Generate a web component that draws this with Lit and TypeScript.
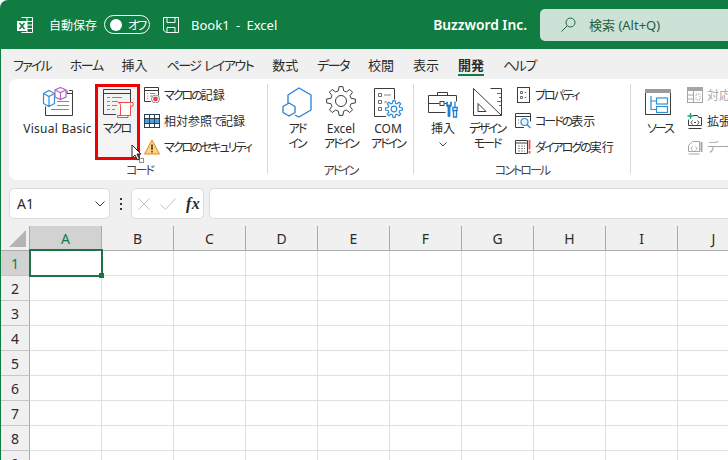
import { LitElement, html, css, svg } from 'lit';
import { customElement } from 'lit/decorators.js';

const DARK = '#3c3c3c';
const BLUE = '#2f8fd8';
const GRAY = '#a6a6a6';

// outline of a gear, used for the Excel add-in and COM add-in icons
function gearPath(cx: number, cy: number, ro: number, ri: number, teeth: number) {
  const step = (Math.PI * 2) / teeth;
  let d = '';
  for (let i = 0; i < teeth; i++) {
    const a = i * step - Math.PI / 2;
    const pts: [number, number][] = [
      [ri, a - step * 0.32],
      [ro, a - step * 0.17],
      [ro, a + step * 0.17],
      [ri, a + step * 0.32],
    ];
    for (const [r, t] of pts) {
      d += `${d ? 'L' : 'M'}${(cx + r * Math.cos(t)).toFixed(2)} ${(cy + r * Math.sin(t)).toFixed(2)}`;
    }
  }
  return d + 'Z';
}

// the ribbon font has narrow kana, so kana runs get tighter spacing than kanji
function jp(text: string) {
  return text
    .split(/([\u3040-\u30ff]+)/)
    .filter(Boolean)
    .map((part) => (/^[\u3040-\u30ff]/.test(part) ? html`<span class="kana">${part}</span>` : part));
}

const big = (body: unknown) => html`<svg class="big-icon" viewBox="0 0 32 32" fill="none">${body}</svg>`;
const small = (body: unknown) => html`<svg class="small-icon" viewBox="0 0 16 16" fill="none">${body}</svg>`;

const icons = {
  vba: big(svg`
    <path d="M27 4.500h3.500v25h-27v-9" stroke="${DARK}"/>
    <path d="M25 4.500v3h5.500" stroke="${DARK}"/>
    <path d="M15 15.500h12M15 19.500h12M9 23.500h18" stroke="#8a8a8a"/>
    <path d="M7 4.500l5.500 3v10l-5.500 3-5.500-3v-10zM1.500 7.500l5.500 3 5.500-3M7 10.500v10" stroke="${BLUE}" stroke-width="1.200" fill="#fff"/>
    <path d="M18.500 1.500l5.500 2.500v7l-5.500 2.500-5.500-2.500v-7zM13 4l5.500 2.500L24 4M18.500 6.500v7" stroke="#b565c8" stroke-width="1.200" fill="#fff"/>`),
  macro: big(svg`
    <path d="M14 28.500H1.500v-25h27V16" stroke="${DARK}"/>
    <path d="M1 7.500h28" stroke="${DARK}"/>
    <path d="M5 11.500h3M10 11.500h10M5 15.500h3M10 15.500h6M5 19.500h3M10 19.500h5M5 23.500h3M10 23.500h3" stroke="#8a8a8a"/>
    <path d="M16 16.500h12.500v13H18.500v-10c0-2-1-3-2.500-3z" fill="#fff" stroke="#ee4b4b"/>
    <path d="M28.500 16.500h2.500v3.500h-2.500M15.500 29.500h10.500v2h-10.500z" fill="#fff" stroke="#ee4b4b"/>`),
  record: small(svg`
    <path d="M7 14.500H.5v-14h14v8" stroke="${DARK}"/>
    <path d="M.5 3.500h14" stroke="${DARK}"/>
    <path d="M3 6.500h1M6 6.500h5M3 9h1M6 9h2M3 11.500h1" stroke="#8a8a8a"/>
    <circle cx="11.500" cy="12" r="4" fill="#fff" stroke="#8a8a8a"/>
    <circle cx="11.500" cy="12" r="2.400" fill="#e8424d"/>`),
  relative: small(svg`
    <rect x=".5" y="1.500" width="15" height="13" fill="#fff" stroke="#2d3f4f"/>
    <rect x="1" y="6" width="14" height="4.500" fill="#4a9fe3"/>
    <path d="M5.500 1.500v13M10.500 1.500v13M.5 5.500h15M.5 10.500h15" stroke="#2d3f4f"/>`),
  warning: small(svg`
    <path d="M8 1L15.500 15H.5z" fill="#fbd57c" stroke="#e8862a" stroke-linejoin="round"/>
    <path d="M8 5.500v5.500" stroke="#333" stroke-width="1.500"/>
    <path d="M8 12v1.600" stroke="#333" stroke-width="1.500"/>`),
  addin: big(svg`
    <path d="M7 17V9L18 2l12 7v15l-12 7-4-2" stroke="#2b7cd3" stroke-width="1.300" stroke-linejoin="round"/>
    <path d="M8 17l6 3.500v6L8 30l-6-3.500v-6z" stroke="#2b7cd3" stroke-width="1.300" fill="#fff" stroke-linejoin="round"/>`),
  gear: big(svg`
    <path d="${gearPath(16, 15, 14.500, 10.500, 8)}" stroke="${DARK}" stroke-linejoin="round"/>
    <circle cx="16" cy="15" r="5.500" stroke="${DARK}"/>`),
  com: big(svg`
    <path d="M14 30.500H2.500v-28h20v11" stroke="${DARK}"/>
    <path d="M6.500 7.500h3v3h-3zM6.500 14.500h3v3h-3zM6.500 21.500h3v3h-3z" stroke="#6a6a6a"/>
    <path d="M12 9h7M12 16h3" stroke="#8a8a8a"/>
    <path d="${gearPath(22, 23, 8.500, 6, 8)}" stroke="${BLUE}" stroke-width="1.200" fill="#fff" stroke-linejoin="round"/>
    <circle cx="22" cy="23" r="2.800" stroke="${BLUE}" stroke-width="1.200"/>`),
  tools: big(svg`
    <path d="M10.500 9V6.500h10V9" stroke="${DARK}"/>
    <path d="M18.500 26.500H1.500v-17h28v6" stroke="${DARK}"/>
    <path d="M1.500 17.500h11M17.500 17.500h2" stroke="${DARK}"/>
    <rect x="13" y="15.500" width="4" height="4" stroke="${DARK}"/>
    <path d="M19.500 16v3.500c0 1 1 1.500 1.500 2v9h2v-9c.5-.5 1.500-1 1.500-2V16l-1 0v3h-3v-3z" fill="#1f7fd0" stroke="#1f7fd0" stroke-width=".8"/>
    <path d="M28 15.500v6M25.800 21.500h4.400v3h-4.400zM26.500 24.500h3v6.500h-3z" stroke="#1f7fd0" stroke-width="1.300"/>`),
  square: big(svg`
    <path d="M19.500 2.500h11v27h-11" stroke="${DARK}"/>
    <path d="M26 7.500h4M28 11.500h2M26 15.500h4M28 19.500h2" stroke="#6a6a6a"/>
    <path d="M2.500 2.500v27h28z" fill="#fff" stroke="${DARK}"/>
    <path d="M7 17.500v8h8z" stroke="${DARK}"/>`),
  props: small(svg`
    <rect x="2.500" y=".5" width="12" height="15" stroke="${DARK}"/>
    <path d="M5.500 4.500h2v2h-2zM5.500 9.500h2v2h-2z" stroke="#6a6a6a"/>
    <path d="M9.500 5.500h2M9.500 10.500h2" stroke="#8a8a8a"/>`),
  code: small(svg`
    <path d="M9 14.500H.5v-14h15v8" stroke="${DARK}"/>
    <path d="M.5 3.500h15" stroke="${DARK}"/>
    <path d="M3 7h1M3 10h1" stroke="#8a8a8a"/>
    <circle cx="9.500" cy="9" r="3.500" fill="#e7f2fb" stroke="${BLUE}" stroke-width="1.200"/>
    <path d="M12 11.500l3.500 3.500" stroke="${BLUE}" stroke-width="1.500"/>`),
  dialog: small(svg`
    <path d="M.5 1.500h12v13H.5z" stroke="${DARK}"/>
    <path d="M.5 4h12" stroke="${DARK}"/>
    <path d="M3 7h7M3 9.500h7M3 12h7" stroke="#8a8a8a" stroke-dasharray="2 1"/>
    <path d="M14.500 1v9.500M14.500 12v2.500" stroke="#ee4b4b" stroke-width="1.800"/>`),
  source: big(svg`
    <rect x="1.500" y="3.500" width="25" height="25" fill="#fff" stroke="${DARK}"/>
    <rect x="1" y="3" width="26" height="4" fill="#9a9a9a"/>
    <path d="M7 10v13.500h5M7 15h5" stroke="${BLUE}" stroke-width="1.200"/>
    <rect x="12.500" y="12" width="11" height="6" stroke="${BLUE}" stroke-width="1.200"/>
    <rect x="12.500" y="20.500" width="11" height="6" stroke="${BLUE}" stroke-width="1.200"/>`),
  mapping: small(svg`
    <rect x=".5" y=".5" width="15" height="15" stroke="${GRAY}"/>
    <rect x="1" y="1" width="14" height="3" fill="${GRAY}"/>
    <path d="M.5 8h6M.5 12h6M6.500 4v11.500" stroke="${GRAY}"/>
    <path d="M9 7h4v6H9z" stroke="${GRAY}" stroke-dasharray="1 1"/>`),
  expansion: small(svg`
    <path d="M1.500 6.500v6h13v-8h-3l-1-2H6" stroke="${DARK}"/>
    <path d="M1.500 15.500h13" stroke="${DARK}"/>
    <path d="M5.500 7.500L4 9.500l1.500 2M10.500 7.500L12 9.500l-1.500 2M7 9.500h2" stroke="#444"/>
    <path d="M3.500 0v6M.5 3h6" stroke="#21a366" stroke-width="1.400"/>`),
  refresh: small(svg`
    <path d="M1.500 6.500v6h11v-10h-7l-4 4" stroke="${GRAY}"/>
    <path d="M1.500 15h11" stroke="${GRAY}"/>
    <path d="M14.500 3v10" stroke="${GRAY}" stroke-width="2"/>
    <path d="M5.500 7.500L4 9.500l1.500 2M8.500 7.500L10 9.500l-1.500 2" stroke="${GRAY}"/>`),
};

const tabs = ['ファイル', 'ホーム', '挿入', 'ページ レイアウト', '数式', 'データ', '校閲', '表示', '開発', 'ヘルプ'];
const columns = ['A', 'B', 'C', 'D', 'E', 'F', 'G', 'H', 'I', 'J'];
const rows = [1, 2, 3, 4, 5, 6, 7, 8, 9];

@customElement('app-root')
export class AppRoot extends LitElement {
  static styles = css`
    :host {
      display: block;
      width: 728px;
      height: 460px;
      overflow: hidden;
      background: #fff;
      color: #2b2b2b;
      font-family: 'Noto Sans', 'Noto Sans CJK JP', sans-serif;
      font-feature-settings: 'palt';
      font-size: 12px;
    }

    svg {
      display: block;
      flex: none;
    }

    .kana {
      letter-spacing: -2px;
    }

    .big-icon {
      width: 32px;
      height: 32px;
    }

    .small-icon {
      width: 16px;
      height: 16px;
    }

    .titlebar {
      display: flex;
      align-items: center;
      height: 49px;
      padding-left: 17px;
      background: #107c41;
      border-top-left-radius: 8px;
      color: #fff;
      white-space: nowrap;
      overflow: hidden;
    }

    .logo {
      width: 16px;
      height: 16px;
      margin-right: 16px;
    }

    .toggle {
      display: flex;
      align-items: center;
      flex: none;
      width: 46px;
      height: 19px;
      margin: 0 13px 0 7px;
      padding-left: 5px;
      box-sizing: border-box;
      border: 1px solid #fff;
      border-radius: 10px;
    }

    .knob {
      width: 12px;
      height: 12px;
      margin-right: 6px;
      border-radius: 50%;
      background: #fff;
    }

    .save {
      width: 16px;
      height: 16px;
      margin-right: 12px;
    }

    .doc-name {
      font-size: 13px;
      word-spacing: 3px;
    }

    .company {
      margin-left: auto;
      margin-right: 13px;
      font-size: 13.800px;
      font-weight: 600;
    }

    .search {
      display: flex;
      align-items: center;
      flex: none;
      gap: 13px;
      width: 200px;
      height: 32px;
      margin-right: -12px;
      padding-left: 21px;
      box-sizing: border-box;
      border-radius: 5px;
      background: #cde2d6;
      color: #24603f;
      font-size: 13px;
    }

    .body {
      height: 411px;
      border-left: 1px solid #107c41;
      background: #f0f0f0;
      overflow: hidden;
    }

    .tabs {
      display: flex;
      gap: 19px;
      height: 20px;
      padding: 7px 0 3px 12px;
      font-size: 13px;
      line-height: 18px;
      white-space: nowrap;
    }

    .tabs .kana {
      letter-spacing: -1.500px;
    }

    .tabs .tab:first-child .kana {
      letter-spacing: -1.800px;
    }

    .tab {
      height: 20px;
      box-sizing: border-box;
    }

    .tab.active {
      font-weight: 700;
      border-bottom: 2px solid #107c41;
    }

    .ribbon {
      display: flex;
      width: 728px;
      height: 101px;
      margin-left: 8px;
      padding-top: 5px;
      box-sizing: border-box;
      border-radius: 8px 0 0 8px;
      background: #fff;
      white-space: nowrap;
    }

    .group {
      display: flex;
      flex-direction: column;
      flex: none;
      height: 90px;
      box-sizing: border-box;
      border-right: 1px solid #d8d8d8;
    }

    .group.code {
      width: 259px;
    }

    .group.addins {
      width: 146px;
    }

    .group.controls {
      width: 217px;
    }

    .group.xml {
      border-right: none;
    }

    .group-body {
      display: flex;
      flex: none;
      height: 79px;
      padding-left: 7px;
    }

    .code .group-body {
      padding-left: 11px;
    }

    .group-label {
      flex: none;
      height: 14px;
      margin-top: 1px;
      line-height: 14px;
      text-align: center;
      color: #444;
    }

    .code .group-label {
      padding-left: 3px;
    }

    .big {
      position: relative;
      display: flex;
      flex-direction: column;
      align-items: center;
      flex: none;
      width: 44px;
      height: 76px;
      padding-top: 2px;
      box-sizing: border-box;
      line-height: 15px;
      text-align: center;
    }

    .big .label {
      margin-top: 3px;
    }

    .big.wide {
      width: 75px;
      margin-right: 1px;
      letter-spacing: 0.250px;
    }

    .big.gap {
      margin-left: 3px;
    }

    .big.marked {
      background: #f3f3f3;
    }

    .big.marked .label {
      margin-right: 3px;
    }

    .big.marked::after {
      content: '';
      position: absolute;
      inset: 0 0 0 -1px;
      border: 3px solid #f00000;
    }

    .chevron {
      width: 8px;
      height: 5px;
      margin-top: 6px;
    }

    .list {
      display: flex;
      flex-direction: column;
      gap: 4px;
      flex: none;
    }

    .code .list {
      margin-left: 3px;
    }

    .controls .list {
      margin-left: 5px;
    }

    .xml .list {
      margin-left: 4px;
    }

    .row {
      display: flex;
      align-items: center;
      gap: 4px;
      height: 22px;
      padding-left: 1px;
    }

    .row.off {
      color: #a6a6a6;
    }

    .formula {
      display: flex;
      align-items: center;
      height: 31px;
      padding: 8px 0 7px 8px;
    }

    .box {
      flex: none;
      height: 31px;
      box-sizing: border-box;
      border: 1px solid #dcdcdc;
      border-radius: 5px;
      background: #fff;
    }

    .name {
      display: flex;
      align-items: center;
      justify-content: space-between;
      width: 101px;
      padding: 0 4px 0 7px;
      font-size: 14px;
    }

    .dots {
      width: 4px;
      height: 12px;
      margin: 0 8px 0 9px;
    }

    .fx-box {
      display: flex;
      align-items: center;
      width: 73px;
      padding-left: 6px;
    }

    .check {
      margin-left: 10px;
    }

    .fx {
      margin-left: 10px;
      font-family: 'Liberation Serif', serif;
      font-style: italic;
      font-weight: 700;
      font-size: 16px;
      letter-spacing: 0.500px;
    }

    .input {
      flex: 1;
      margin-left: 5px;
      border-radius: 5px 0 0 5px;
      border-right: none;
    }

    .sheet {
      position: relative;
      display: grid;
      grid-template-columns: 29px repeat(10, 72px);
      grid-auto-rows: 25px;
      background: #fff;
      font-size: 14px;
    }

    .corner,
    .col-head,
    .row-head {
      display: flex;
      align-items: center;
      justify-content: center;
      box-sizing: border-box;
      background: #f0f0f0;
    }

    .corner {
      justify-content: flex-end;
      align-items: flex-end;
      padding: 0 3px 3px 0;
      border-right: 1px solid #ababab;
      border-bottom: 1px solid #ababab;
    }

    .col-head {
      border-right: 1px solid #ababab;
      border-bottom: 1px solid #ababab;
    }

    .row-head {
      border-right: 1px solid #ababab;
      border-bottom: 1px solid #c6c6c6;
    }

    .col-head.on,
    .row-head.on {
      background: #d2d2d2;
      color: #107c41;
    }

    .cell {
      box-sizing: border-box;
      border-right: 1px solid #e0e0e0;
      border-bottom: 1px solid #e0e0e0;
    }

    .selection {
      position: absolute;
      left: 28px;
      top: 23px;
      width: 74px;
      height: 28px;
      box-sizing: border-box;
      border: 2px solid #1f7246;
    }

    .handle {
      position: absolute;
      right: -3px;
      bottom: -3px;
      width: 5px;
      height: 5px;
      background: #1f7246;
    }

    .cursor {
      position: absolute;
      left: 131px;
      top: 144px;
      width: 14px;
      height: 20px;
    }
  `;

  render() {
    return html`
      <div class="titlebar">
        <svg class="logo" viewBox="0 0 16 16" fill="none">
          <path d="M4.500.5h11v15h-11M10 .5v15M10 4.500h5.500M10 8h5.500M10 11.500h5.500" stroke="#fff"/>
          <rect x="0" y="4" width="10" height="10" fill="#fff"/>
          <path d="M2.500 6l5 6M7.500 6l-5 6" stroke="#107c41" stroke-width="1.600"/>
        </svg>
        <span>自動保存</span>
        <div class="toggle"><div class="knob"></div><span>${jp('オフ')}</span></div>
        <svg class="save" viewBox="0 0 16 16" fill="none" stroke="#fff">
          <path d="M.5.5h15v15H3l-2.500-2.500z"/>
          <path d="M4 .5v5h8v-5M4 15.500v-5h8v5"/>
        </svg>
        <span class="doc-name">Book1 - Excel</span>
        <span class="company">Buzzword Inc.</span>
        <div class="search">
          <svg width="15" height="15" viewBox="0 0 15 15" fill="none" stroke="#24603f">
            <circle cx="9.500" cy="5.500" r="4.500"/>
            <path d="M6 9l-5.500 5.500"/>
          </svg>
          <span>検索 (Alt+Q)</span>
        </div>
      </div>
      <div class="body">
        <div class="tabs">
          ${tabs.map((t) => html`<div class="tab ${t === '開発' ? 'active' : ''}">${jp(t)}</div>`)}
        </div>
        <div class="ribbon">
          <div class="group code">
            <div class="group-body">
              <div class="big wide">${icons.vba}<div class="label">Visual Basic</div></div>
              <div class="big marked">${icons.macro}<div class="label">${jp('マクロ')}</div></div>
              <div class="list">
                <div class="row">${icons.record}<span>${jp('マクロの記録')}</span></div>
                <div class="row">${icons.relative}<span>${jp('相対参照で記録')}</span></div>
                <div class="row">${icons.warning}<span>${jp('マクロのセキュリティ')}</span></div>
              </div>
            </div>
            <div class="group-label">${jp('コード')}</div>
          </div>
          <div class="group addins">
            <div class="group-body">
              <div class="big">${icons.addin}<div class="label">${jp('アド')}<br />${jp('イン')}</div></div>
              <div class="big">${icons.gear}<div class="label">Excel<br />${jp('アドイン')}</div></div>
              <div class="big gap">${icons.com}<div class="label">COM<br />${jp('アドイン')}</div></div>
            </div>
            <div class="group-label">${jp('アドイン')}</div>
          </div>
          <div class="group controls">
            <div class="group-body">
              <div class="big">
                ${icons.tools}
                <div class="label">挿入</div>
                <svg class="chevron" viewBox="0 0 8 5" fill="none" stroke="#444"><path d="M.5.5L4 4 7.500.5"/></svg>
              </div>
              <div class="big">${icons.square}<div class="label">${jp('デザイン')}<br />${jp('モード')}</div></div>
              <div class="list">
                <div class="row">${icons.props}<span>${jp('プロパティ')}</span></div>
                <div class="row">${icons.code}<span>${jp('コードの表示')}</span></div>
                <div class="row">${icons.dialog}<span>${jp('ダイアログの実行')}</span></div>
              </div>
            </div>
            <div class="group-label">${jp('コントロール')}</div>
          </div>
          <div class="group xml">
            <div class="group-body">
              <div class="big">${icons.source}<div class="label">${jp('ソース')}</div></div>
              <div class="list">
                <div class="row off">${icons.mapping}<span>${jp('対応付けのプロパティ')}</span></div>
                <div class="row">${icons.expansion}<span>${jp('拡張パック')}</span></div>
                <div class="row off">${icons.refresh}<span>${jp('データの更新')}</span></div>
              </div>
            </div>
          </div>
        </div>
        <div class="formula">
          <div class="box name">
            <span>A1</span>
            <svg width="10" height="6" viewBox="0 0 10 6" fill="none" stroke="#333"><path d="M.5.5L5 5 9.500.5"/></svg>
          </div>
          <svg class="dots" viewBox="0 0 4 12" fill="#333">
            <rect x="1" y="0" width="2" height="2"/><rect x="1" y="5" width="2" height="2"/><rect x="1" y="10" width="2" height="2"/>
          </svg>
          <div class="box fx-box">
            <svg width="12" height="12" viewBox="0 0 12 12" fill="none" stroke="#c4c4c4"><path d="M.5.5l11 11M11.500.5l-11 11"/></svg>
            <svg class="check" width="16" height="12" viewBox="0 0 16 12" fill="none" stroke="#c4c4c4"><path d="M.5 6.500l5 5 10-11"/></svg>
            <span class="fx">fx</span>
          </div>
          <div class="box input"></div>
        </div>
        <div class="sheet">
          <div class="corner">
            <svg width="17" height="17" viewBox="0 0 17 17" fill="#b4b4b4"><path d="M17 0v17H0z"/></svg>
          </div>
          ${columns.map((c, i) => html`<div class="col-head ${i === 0 ? 'on' : ''}">${c}</div>`)}
          ${rows.map(
            (r) => html`
              <div class="row-head ${r === 1 ? 'on' : ''}">${r}</div>
              ${columns.map(() => html`<div class="cell"></div>`)}
            `,
          )}
          <div class="selection"><div class="handle"></div></div>
        </div>
      </div>
      <svg class="cursor" viewBox="0 0 14 20" fill="#fff" stroke="#222">
        <path d="M1 1v13l3-3 2.500 5 2-1-2.500-5h4z"/>
        <rect x="8.500" y="14.500" width="4" height="4" stroke-dasharray="1 1"/>
      </svg>
    `;
  }
}
